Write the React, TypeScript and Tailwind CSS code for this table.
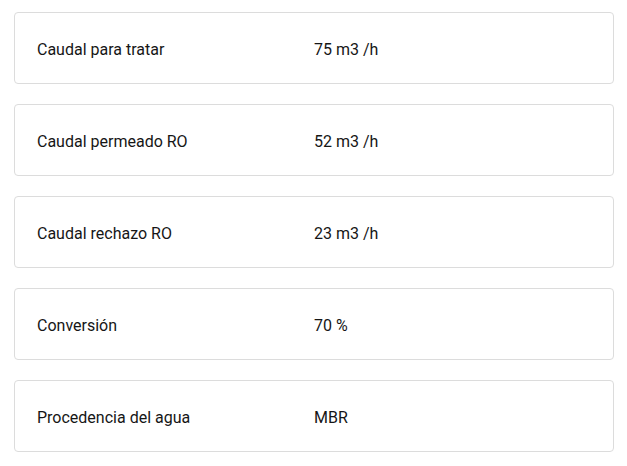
export default function App() {
  const rows: [string, string][] = [
    ["Caudal para tratar", "75 m3 /h"],
    ["Caudal permeado RO", "52 m3 /h"],
    ["Caudal rechazo RO", "23 m3 /h"],
    ["Conversión", "70 %"],
    ["Procedencia del agua", "MBR"],
  ];
  return (
    <div
      className="w-[627px] h-[466px] bg-white pl-[14px] pt-[12px] flex flex-col gap-[20px] text-[16px] text-[#161616]"
      style={{ fontFamily: 'Roboto, sans-serif' }}
    >
      {rows.map(([k, v]) => (
        <div
          key={k}
          className="w-[600px] h-[72px] border border-[#dcdcdc] rounded-[4px] grid grid-cols-2 items-center px-[22px] pt-[4px]"
        >
          <span>{k}</span>
          <span>{v}</span>
        </div>
      ))}
    </div>
  );
}
